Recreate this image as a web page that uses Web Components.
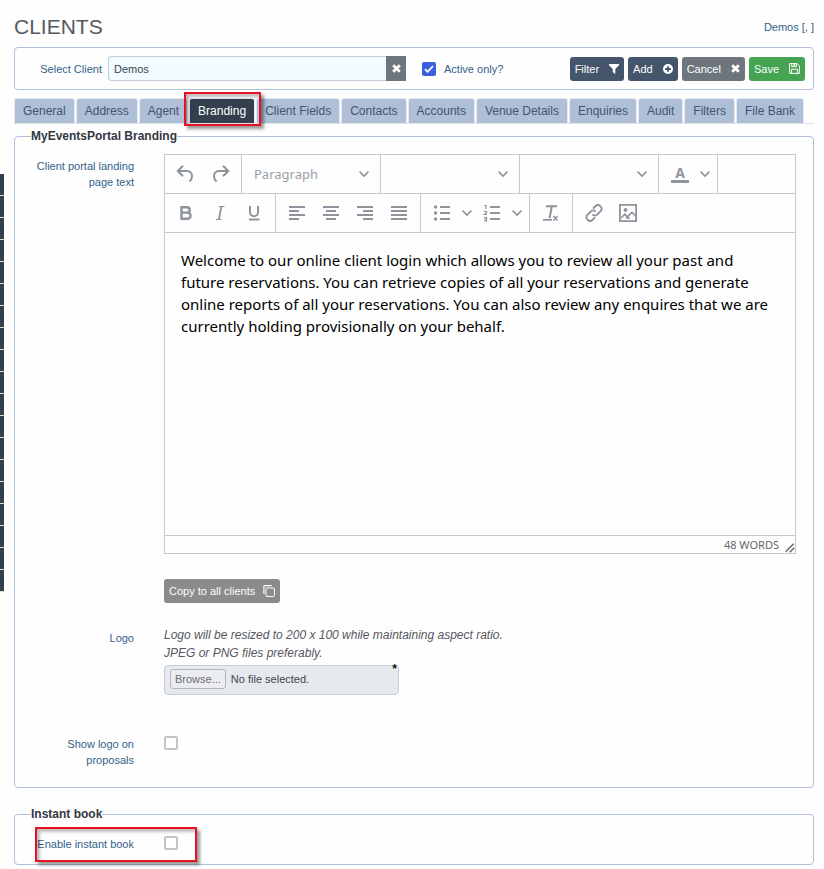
<!DOCTYPE html>
<html lang="en">
<head>
  <meta charset="utf-8">
  <meta name="viewport" content="width=device-width, initial-scale=1">
  <title>Clients</title>
  <style>
    body {
      margin: 0;
      padding: 7px 10px 4px 14px;
      background: #fefefe;
      color: #555860;
      font: 11px/16px "Liberation Sans", Arial, sans-serif;
    }
    .copy { margin-top: 25px; }
    .logo { margin-top: 23px; }
    .proposals { margin-top: 37px; }
  </style>
</head>
<body>
  <side-rail count="19"></side-rail>

  <page-header heading="Clients">Demos [, ]</page-header>
  <client-bar></client-bar>
  <tab-strip active="Branding"></tab-strip>

  <field-group heading="MyEventsPortal Branding">
    <form-row>
      <label slot="label" for="landing">Client portal landing page text</label>
      <rich-editor id="landing">Welcome to our online client login which allows you to review all your past and future reservations. You can retrieve copies of all your reservations and generate online reports of all your reservations. You can also review any enquires that we are currently holding provisionally on your behalf.</rich-editor>
    </form-row>
    <form-row class="copy">
      <action-button icon="copy" tone="muted">Copy to all clients</action-button>
    </form-row>
    <form-row class="logo">
      <label slot="label" for="logo">Logo</label>
      <file-picker id="logo">Logo will be resized to 200 x 100 while maintaining aspect ratio.<br>JPEG or PNG files preferably.</file-picker>
    </form-row>
    <form-row class="proposals">
      <label slot="label" for="show-logo">Show logo on proposals</label>
      <input type="checkbox" id="show-logo">
    </form-row>
  </field-group>

  <field-group heading="Instant book">
    <form-row>
      <label slot="label" for="instant">Enable instant book</label>
      <input type="checkbox" id="instant">
      <call-out slot="note"></call-out>
    </form-row>
  </field-group>

  <script>
    const stroke = 'fill="none" stroke="currentColor" stroke-width="2"';

    const icons = {
      filter: '<svg width="10" height="10" viewBox="0 0 10 10"><path fill="currentColor" d="M0 0h10v1.2L6.3 5v5L3.8 8V5L0 1.2z"/></svg>',
      add: '<svg width="10" height="10" viewBox="0 0 10 10"><circle cx="5" cy="5" r="5" fill="currentColor"/><path d="M5 2.2v5.6M2.2 5h5.6" stroke="#44556c" stroke-width="1.8"/></svg>',
      cross: '<svg width="9" height="9" viewBox="0 0 9 9"><path d="M1.2 1.2l6.6 6.6M7.8 1.2L1.2 7.8" stroke="currentColor" stroke-width="2.8"/></svg>',
      save: '<svg width="11" height="11" viewBox="0 0 11 11" fill="none" stroke="currentColor"><path d="M.6.6h7.6l2.2 2.2v7.6H.6zM2.8.8v2.8h4.6V.8M2.6 10.2V6.2h5.8v4"/><path d="M5.4 1v2" stroke-width="1.4"/></svg>',
      copy: '<svg width="12" height="12" viewBox="0 0 12 12" fill="none" stroke="currentColor"><rect x="3" y="3" width="8.4" height="8.4" rx=".6"/><path d="M.9 8.8V1.2c0-.3.2-.6.6-.6h7.3" stroke-width="1.2"/></svg>',
      undo: `<svg width="24" height="24" viewBox="0 0 24 24" ${stroke}><path d="M9 3.8L3.8 9 9 14.2M4.500 9h8.500c3 0 5 2.200 5 5.200 0 2.300-.8 3.800-2.600 5.300"/></svg>`,
      redo: `<svg width="24" height="24" viewBox="0 0 24 24" ${stroke}><path d="M15 3.800L20.200 9 15 14.200M19.500 9H11c-3 0-5 2.200-5 5.200 0 2.300.8 3.800 2.600 5.300"/></svg>`,
      chevron: '<svg width="10" height="10" viewBox="0 0 10 10" fill="none" stroke="currentColor" stroke-width="1.6"><path d="M.6 2.6L5 7l4.400-4.400"/></svg>',
      bold: '<svg width="24" height="24" viewBox="0 0 24 24" fill="none" stroke="currentColor" stroke-width="2.4"><path d="M7.500 6.200h5.500a2.700 2.700 0 010 5.400H7.500zM7.500 11.600h6a3 3 0 010 6.100h-6zM7.500 5v13.900"/></svg>',
      italic: '<svg width="24" height="24" viewBox="0 0 24 24" fill="none" stroke="currentColor"><path d="M13.400 5.500L10.800 18.500" stroke-width="1.8"/><path d="M10.500 5.500h6M8 18.500h5.500" stroke-width="1.2"/></svg>',
      underline: `<svg width="24" height="24" viewBox="0 0 24 24" ${stroke}><path d="M8 5v6.200a4 4 0 008 0V5M7 18.500h10.500"/></svg>`,
      left: `<svg width="24" height="24" viewBox="0 0 24 24" ${stroke}><path d="M4 6h16M4 10h10M4 14h16M4 18h10"/></svg>`,
      center: `<svg width="24" height="24" viewBox="0 0 24 24" ${stroke}><path d="M4 6h16M7 10h10M4 14h16M7 18h10"/></svg>`,
      right: `<svg width="24" height="24" viewBox="0 0 24 24" ${stroke}><path d="M4 6h16M10 10h10M4 14h16M10 18h10"/></svg>`,
      justify: `<svg width="24" height="24" viewBox="0 0 24 24" ${stroke}><path d="M4 6h16M4 10h16M4 14h16M4 18h16"/></svg>`,
      bullets: `<svg width="24" height="24" viewBox="0 0 24 24" ${stroke}><path d="M10 6h10M10 12h10M10 18h10"/><g fill="currentColor" stroke="none"><circle cx="5.500" cy="6" r="1.700"/><circle cx="5.500" cy="12" r="1.700"/><circle cx="5.500" cy="18" r="1.700"/></g></svg>`,
      numbers: `<svg width="24" height="24" viewBox="0 0 24 24" ${stroke}><path d="M10 6h10M10 12h10M10 18h10"/><path stroke-width="1.2" d="M4.200 4.500H6V8M4 10.500h2.500V12L4.500 13.500h2.500M4 16.500h2.500v3.500H4M4.500 18.200h2"/></svg>`,
      clear: '<svg width="24" height="24" viewBox="0 0 24 24" fill="none" stroke="currentColor"><path d="M7 5.200h11M12.800 5.200L10.600 17" stroke-width="2"/><path d="M4 18.800h9" stroke-width="1.8"/><path d="M14.500 15l4 4.500M18.500 15l-4 4.500" stroke-width="1.5"/></svg>',
      link: '<svg width="24" height="24" viewBox="0 0 24 24" fill="none" stroke="currentColor" stroke-width="1.9"><path d="M11 7.600l2.600-2.600a3.100 3.100 0 014.500 0l.6.6a3.100 3.100 0 010 4.500l-3.600 3.600a3.100 3.100 0 01-4.600-.3"/><path d="M13 16.400l-2.600 2.600a3.100 3.100 0 01-4.500 0l-.6-.6a3.100 3.100 0 010-4.500l3.600-3.600a3.100 3.100 0 014.600.3"/></svg>',
      image: '<svg width="24" height="24" viewBox="0 0 24 24" fill="none" stroke="currentColor" stroke-width="1.8"><path d="M3.900 3.900h16.200v16.200H3.900z"/><path d="M5 17l3.800-3.800 2.700 2.700 4.500-4.600 4 4M10 17.500l1.500-1.600 2 2" stroke-width="1.6"/><circle cx="9.500" cy="9" r="1.900" fill="currentColor" stroke="none"/></svg>',
      resize: '<svg width="10" height="10" viewBox="0 0 10 10" stroke="currentColor" stroke-width="1.5"><path d="M.6 8.800L8.600.8M4.800 9.200l4.400-4.400"/></svg>'
    };

    // Shared look of every tick box on the page
    const tickStyle = (selector) => `
      ${selector} {
        appearance: none;
        box-sizing: border-box;
        display: block;
        width: 14px;
        height: 14px;
        margin: 0;
        border: 2px solid #c4c4cc;
        border-radius: 2px;
        background: #fff;
      }
    `;

    class SideRail extends HTMLElement {
      constructor() {
        super();
        this.attachShadow({ mode: 'open' });
      }

      connectedCallback() {
        const count = Number(this.getAttribute('count'));
        this.shadowRoot.innerHTML = `
          <style>
            :host {
              position: absolute;
              left: 0;
              top: 174px;
              width: 4px;
            }
            i {
              display: block;
              height: 21px;
              border-bottom: 1px solid #e8dcb8;
              background: #333f4d;
            }
          </style>
          ${'<i></i>'.repeat(count)}
        `;
      }
    }

    class PageHeader extends HTMLElement {
      constructor() {
        super();
        this.attachShadow({ mode: 'open' });
      }

      connectedCallback() {
        this.shadowRoot.innerHTML = `
          <style>
            :host {
              display: flex;
              justify-content: space-between;
              align-items: center;
              height: 40px;
            }
            h1 {
              margin: 0;
              font-size: 21px;
              font-weight: normal;
              text-transform: uppercase;
            }
            span { color: #33628a; }
          </style>
          <h1>${this.getAttribute('heading')}</h1>
          <span><slot></slot></span>
        `;
      }
    }

    class ActionButton extends HTMLElement {
      constructor() {
        super();
        this.attachShadow({ mode: 'open' });
      }

      connectedCallback() {
        this.shadowRoot.innerHTML = `
          <style>
            :host { display: inline-flex; }
            button {
              display: flex;
              align-items: center;
              gap: 10px;
              height: 24px;
              padding: 0 5px;
              border: none;
              border-radius: 3px;
              background: #44556c;
              color: #fff;
              font: inherit;
              white-space: nowrap;
              cursor: pointer;
            }
            :host([tone="cancel"]) button { background: #6e757c; }
            :host([tone="save"]) button { background: #45a452; }
            :host([tone="muted"]) button {
              gap: 8px;
              background: #8b8b8b;
            }
          </style>
          <button type="button"><slot></slot>${icons[this.getAttribute('icon')]}</button>
        `;
      }
    }

    class ClientBar extends HTMLElement {
      constructor() {
        super();
        this.attachShadow({ mode: 'open' });
      }

      connectedCallback() {
        this.shadowRoot.innerHTML = `
          <style>
            :host {
              display: flex;
              align-items: center;
              box-sizing: border-box;
              height: 43px;
              padding: 0 8px;
              border: 1px solid #b0bfdb;
              border-radius: 4px;
              color: #33628a;
            }
            .client {
              flex: 0 0 79px;
              text-align: right;
            }
            .picker {
              display: flex;
              flex: 0 1 298px;
              height: 25px;
              margin: 0 16px 0 6px;
            }
            .picker input {
              box-sizing: border-box;
              flex: 1;
              min-width: 0;
              padding: 0 5px;
              border: 1px solid #c5cbd8;
              border-right: none;
              border-radius: 4px 0 0 4px;
              background: #f0fcff;
              color: #41464e;
              font: inherit;
            }
            .picker button {
              display: grid;
              place-items: center;
              width: 20px;
              padding: 0;
              border: none;
              background: #6e757c;
              color: #fff;
            }
            .tick { display: grid; }
            .tick > * { grid-area: 1 / 1; }
            .tick svg {
              place-self: center;
              color: #fff;
              pointer-events: none;
            }
            ${tickStyle('.tick input')}
            .tick input {
              border: none;
              background: #3b5fdf;
            }
            .active { margin-left: 8px; }
            .actions {
              display: flex;
              gap: 4px;
              margin-left: auto;
            }
          </style>
          <label class="client" for="client">Select Client</label>
          <div class="picker">
            <input id="client" type="text" value="Demos">
            <button type="button" aria-label="Clear client">${icons.cross}</button>
          </div>
          <span class="tick">
            <input id="active" type="checkbox" checked>
            <svg width="10" height="10" viewBox="0 0 10 10" fill="none" stroke="currentColor" stroke-width="1.8"><path d="M1 5.200l2.600 2.600L9 2.200"/></svg>
          </span>
          <label class="active" for="active">Active only?</label>
          <div class="actions">
            <action-button icon="filter">Filter</action-button>
            <action-button icon="add">Add</action-button>
            <action-button icon="cross" tone="cancel">Cancel</action-button>
            <action-button icon="save" tone="save">Save</action-button>
          </div>
        `;
      }
    }

    // Red frame drawn round whatever it is placed in
    class CallOut extends HTMLElement {
      constructor() {
        super();
        this.attachShadow({ mode: 'open' });
        this.shadowRoot.innerHTML = `
          <style>
            :host {
              position: absolute;
              inset: var(--call-out-inset, -6px -6px -3px -5px);
              box-sizing: border-box;
              border: 2px solid #e81123;
              box-shadow: 3px 3px 3px rgba(0, 0, 0, 0.4), inset 3px 3px 3px rgba(0, 0, 0, 0.25);
              pointer-events: none;
              z-index: 1;
            }
          </style>
        `;
      }
    }

    class TabStrip extends HTMLElement {
      constructor() {
        super();
        this.attachShadow({ mode: 'open' });
      }

      connectedCallback() {
        const active = this.getAttribute('active');
        const tabs = ['General', 'Address', 'Agent', 'Branding', 'Client Fields', 'Contacts',
          'Accounts', 'Venue Details', 'Enquiries', 'Audit', 'Filters', 'File Bank'];
        this.shadowRoot.innerHTML = `
          <style>
            :host {
              display: flex;
              gap: 1px;
              margin: 8px 0 4px;
              border-bottom: 1px solid #dfe2e8;
              font-size: 12px;
            }
            div { position: relative; }
            a {
              display: block;
              padding: 0 8px;
              border: 1px solid #e3e7ef;
              border-bottom: none;
              border-radius: 3px 3px 0 0;
              background: #afbfd8;
              color: #44546c;
              line-height: 24px;
              text-decoration: none;
              white-space: nowrap;
            }
            .active a {
              background: #333f4d;
              color: #fff;
            }
          </style>
          ${tabs.map((name) => name === active
            ? `<div class="active"><a href="#">${name}</a><call-out></call-out></div>`
            : `<div><a href="#">${name}</a></div>`).join('')}
        `;
      }
    }

    class FieldGroup extends HTMLElement {
      constructor() {
        super();
        this.attachShadow({ mode: 'open' });
      }

      connectedCallback() {
        this.shadowRoot.innerHTML = `
          <style>
            :host { display: block; }
            :host(:not(:last-of-type)) { margin-bottom: 18px; }
            fieldset {
              min-width: 0;
              margin: 0;
              padding: 10px 17px 12px 9px;
              border: 1px solid #b0bfdb;
              border-radius: 4px;
            }
            :host(:not(:last-of-type)) fieldset { padding-bottom: 19px; }
            legend {
              margin-left: 7px;
              padding: 0;
              color: #333842;
              font-size: 12px;
              font-weight: bold;
            }
          </style>
          <fieldset>
            <legend>${this.getAttribute('heading')}</legend>
            <slot></slot>
          </fieldset>
        `;
      }
    }

    class FormRow extends HTMLElement {
      constructor() {
        super();
        this.attachShadow({ mode: 'open' });
        this.shadowRoot.innerHTML = `
          <style>
            :host {
              display: grid;
              grid-template-columns: 110px 1fr;
              column-gap: 30px;
            }
            .label {
              position: relative;
              padding-top: 4px;
              color: #33628a;
              text-align: right;
              --call-out-inset: -5px -63px -10px 11px;
            }
            .field { min-width: 0; }
            ${tickStyle('::slotted(input[type="checkbox"])')}
            ::slotted(input[type="checkbox"]) { margin-top: 4px !important; }
          </style>
          <div class="label"><slot name="label"></slot><slot name="note"></slot></div>
          <div class="field"><slot></slot></div>
        `;
      }
    }

    class RichEditor extends HTMLElement {
      static formAssociated = true;

      constructor() {
        super();
        this.attachShadow({ mode: 'open', delegatesFocus: true });
      }

      button(name, label) {
        return `<button type="button" aria-label="${label}">${icons[name]}</button>`;
      }

      split(icon, label) {
        return `<button type="button" aria-label="${label}">${icon}</button>
          <button type="button" class="more" aria-label="${label} options">${icons.chevron}</button>`;
      }

      select(label, value) {
        return `<div class="group select">
          <select aria-label="${label}"><option>${value}</option></select>
          ${icons.chevron}
        </div>`;
      }

      connectedCallback() {
        const text = this.textContent.trim();
        const words = text.split(/\s+/).length;
        this.shadowRoot.innerHTML = `
          <style>
            :host {
              display: block;
              border: 1px solid #c8c8c8;
              font-family: "Noto Sans", "Open Sans", sans-serif;
            }
            .bar {
              display: flex;
              height: 38px;
              border-bottom: 1px solid #c8c8c8;
              color: #8e939c;
            }
            .group {
              display: flex;
              align-items: center;
              padding: 0 4px;
              border-right: 1px solid #c8c8c8;
            }
            .group.open { border-right: none; }
            button {
              display: grid;
              place-items: center;
              width: 34px;
              height: 34px;
              padding: 0;
              border: none;
              background: none;
              color: inherit;
            }
            .more { width: 16px; }
            .select {
              display: grid;
              grid-template-columns: 130px;
            }
            .select > * { grid-area: 1 / 1; }
            select {
              appearance: none;
              width: 100%;
              height: 34px;
              padding: 0 8px;
              border: none;
              background: none;
              color: #9a9ea6;
              font: 13px "Noto Sans", "Open Sans", sans-serif;
            }
            .select svg {
              justify-self: end;
              margin-right: 7px;
              pointer-events: none;
            }
            .colour {
              width: 18px;
              border-bottom: 3px solid currentColor;
              font: bold 14px/14px "Noto Sans", sans-serif;
              text-align: center;
            }
            textarea {
              display: block;
              box-sizing: border-box;
              width: 100%;
              height: 302px;
              padding: 16px;
              border: none;
              outline: none;
              resize: none;
              background: none;
              color: #000;
              font: 15px/22px "Noto Sans", "Open Sans", sans-serif;
            }
            .status {
              display: flex;
              justify-content: flex-end;
              align-items: center;
              gap: 6px;
              height: 17px;
              border-top: 1px solid #c8c8c8;
              color: #62676f;
              font-size: 11px;
            }
            .status svg { align-self: flex-end; }
          </style>
          <div class="bar">
            <div class="group">${this.button('undo', 'Undo')}${this.button('redo', 'Redo')}</div>
            ${this.select('Block format', 'Paragraph')}
            ${this.select('Font', '')}
            ${this.select('Font size', '')}
            <div class="group">${this.split('<span class="colour">A</span>', 'Text colour')}</div>
          </div>
          <div class="bar">
            <div class="group">
              ${this.button('bold', 'Bold')}${this.button('italic', 'Italic')}${this.button('underline', 'Underline')}
            </div>
            <div class="group">
              ${this.button('left', 'Align left')}${this.button('center', 'Align centre')}
              ${this.button('right', 'Align right')}${this.button('justify', 'Justify')}
            </div>
            <div class="group">
              ${this.split(icons.bullets, 'Bullet list')}${this.split(icons.numbers, 'Numbered list')}
            </div>
            <div class="group">${this.button('clear', 'Clear formatting')}</div>
            <div class="group open">${this.button('link', 'Link')}${this.button('image', 'Image')}</div>
          </div>
          <textarea aria-label="Client portal landing page text" spellcheck="false">${text}</textarea>
          <div class="status"><span>${words} WORDS</span>${icons.resize}</div>
        `;
      }
    }

    class FilePicker extends HTMLElement {
      static formAssociated = true;

      constructor() {
        super();
        this.attachShadow({ mode: 'open', delegatesFocus: true });
        this.shadowRoot.innerHTML = `
          <style>
            :host { display: block; }
            p {
              margin: 0 0 3px;
              font-size: 12px;
              font-style: italic;
              line-height: 18px;
            }
            .box {
              position: relative;
              display: flex;
              align-items: flex-start;
              gap: 5px;
              box-sizing: border-box;
              max-width: 235px;
              height: 30px;
              padding: 3px 5px;
              border: 1px solid #c9cddb;
              border-radius: 4px;
              background: #e6e9ed;
              color: #41464e;
              line-height: 20px;
            }
            button {
              height: 20px;
              padding: 0 4px;
              border: 1px solid #b4b6bf;
              border-radius: 3px;
              background: #ebecf0;
              color: #6b6e76;
              font: inherit;
              line-height: 18px;
            }
            b {
              position: absolute;
              top: -3px;
              right: 1px;
              color: #111;
              font-size: 12px;
              line-height: 12px;
            }
          </style>
          <p><slot></slot></p>
          <div class="box">
            <button type="button">Browse...</button>
            <span>No file selected.</span>
            <input type="file" accept="image/png,image/jpeg" hidden>
            <b>*</b>
          </div>
        `;
        const input = this.shadowRoot.querySelector('input');
        this.shadowRoot.querySelector('button').addEventListener('click', () => input.click());
        input.addEventListener('change', () => {
          this.shadowRoot.querySelector('span').textContent =
            input.files.length ? input.files[0].name : 'No file selected.';
        });
      }
    }

    customElements.define('side-rail', SideRail);
    customElements.define('page-header', PageHeader);
    customElements.define('action-button', ActionButton);
    customElements.define('client-bar', ClientBar);
    customElements.define('call-out', CallOut);
    customElements.define('tab-strip', TabStrip);
    customElements.define('field-group', FieldGroup);
    customElements.define('form-row', FormRow);
    customElements.define('rich-editor', RichEditor);
    customElements.define('file-picker', FilePicker);
  </script>
</body>
</html>
